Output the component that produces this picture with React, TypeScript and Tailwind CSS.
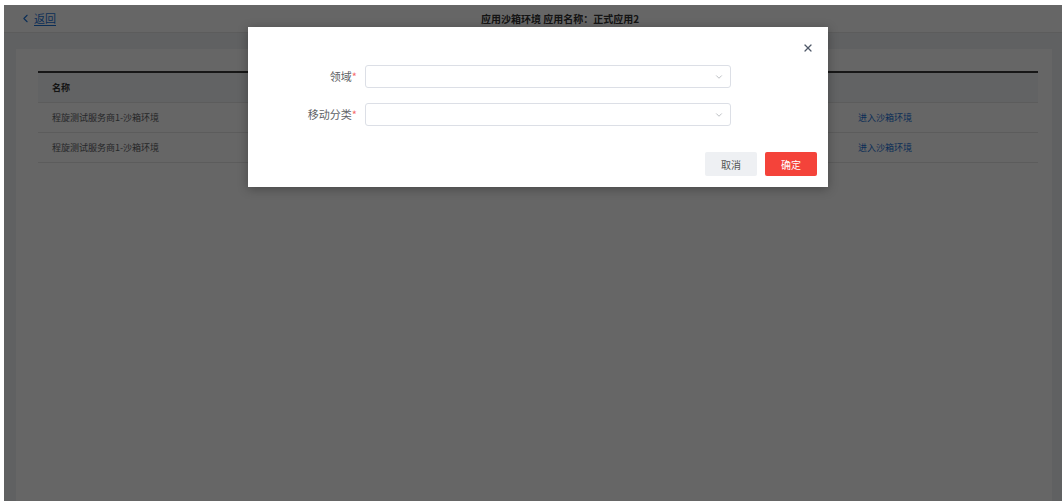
import { ChevronDown, ChevronLeft, X } from 'lucide-react'

const rows = ['程旋测试服务商1-沙箱环境', '程旋测试服务商1-沙箱环境']

const font = { fontFamily: '"Noto Sans CJK SC", "Noto Sans", sans-serif' }

function Field({ label }: { label: string }) {
  return (
    <div className="flex items-center">
      <div className="w-[109px] text-right text-[11px] text-[#606266]">
        {label}
        <span className="text-[#f56c6c]">*</span>
      </div>
      <div className="ml-[8px] flex h-[23px] w-[366px] items-center justify-end rounded-[3px] border border-[#dcdfe6] bg-white pr-[6px]">
        <ChevronDown className="h-[10px] w-[10px] text-[#b0b3b8]" strokeWidth={2} />
      </div>
    </div>
  )
}

export default function App() {
  return (
    <div className="h-[501px] w-[1062px] overflow-hidden bg-white pl-[4px] pt-[5px]" style={font}>
      <div className="relative flex h-[496px] w-[1058px] flex-col">
        {/* page under the mask */}
        <header className="flex h-[28px] shrink-0 items-center border-b border-[#e6e6e6] bg-white">
          <div className="flex w-[120px] items-center gap-[2px] pl-[15px] text-[11px] text-[#1a73d9]">
            <ChevronLeft className="h-[13px] w-[13px]" strokeWidth={2} />
            <span className="underline underline-offset-2">返回</span>
          </div>
          <div className="flex flex-1 justify-center pr-[66px] text-[10px] font-bold text-[#333]">
            应用沙箱环境 应用名称：正式应用2
          </div>
        </header>

        <main className="flex flex-1 flex-col bg-[#f0f2f5] pl-[12px] pr-[10px] pt-[16px]">
          <div className="flex-1 bg-white pl-[22px] pr-[14px] pt-[22px]">
            <div className="border-t-2 border-[#3a3a3a] text-[9px] text-[#606266]">
              <div className="flex h-[30px] items-center border-b border-[#e6e6e6] bg-[#f6f7f9] pl-[14px] font-bold text-[#333]">
                名称
              </div>
              {rows.map((r, i) => (
                <div key={i} className="flex h-[30px] items-center border-b border-[#e6e6e6] pl-[14px]">
                  <span className="w-[806px]">{r}</span>
                  <span className="text-[#1a73d9]">进入沙箱环境</span>
                </div>
              ))}
            </div>
          </div>
        </main>

        {/* mask */}
        <div className="absolute inset-0 bg-black/60" />

        {/* dialog */}
        <div className="absolute left-[244px] top-[22px] flex h-[160px] w-[580px] flex-col bg-white shadow-[0_2px_10px_rgba(0,0,0,0.3)]">
          <X className="absolute right-[14px] top-[15px] h-[12px] w-[12px] text-[#4f5968]" strokeWidth={2.4} />
          <div className="flex flex-col gap-[15px] pt-[38px]">
            <Field label="领域" />
            <Field label="移动分类" />
          </div>
          <div className="mt-[26px] flex justify-end gap-[8px] pr-[11px]">
            <button className="h-[24px] w-[52px] rounded-[2px] bg-[#eef0f3] text-[10px] text-[#555]">取消</button>
            <button className="h-[24px] w-[52px] rounded-[2px] bg-[#f4433a] text-[10px] text-white">确定</button>
          </div>
        </div>
      </div>
    </div>
  )
}
